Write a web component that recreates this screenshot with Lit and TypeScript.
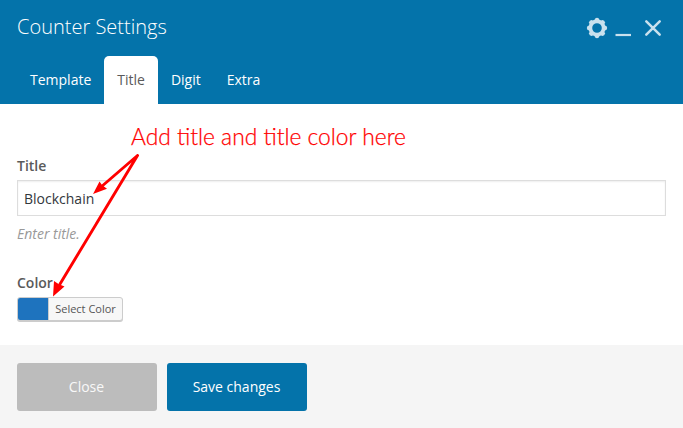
import { LitElement, html, svg, css } from "lit";
import { customElement, state } from "lit/decorators.js";
import { classMap } from "lit/directives/class-map.js";

const TEETH = [0, 45, 90, 135, 180, 225, 270, 315];

@customElement("settings-icon")
class SettingsIcon extends LitElement {
  static styles = css`
    :host { display: block; width: 22px; height: 22px; }
    svg { display: block; }
  `;
  static properties = { name: { type: String } };
  declare name: string;

  render() {
    const shapes: Record<string, unknown> = {
      gear: svg`
        <circle cx="11" cy="11" r="6.6" fill="none" stroke="#c9e1ee" stroke-width="3.6"/>
        ${TEETH.map(a => svg`<path d="M8 4 L9.2 1.4 Q11 .2 12.8 1.4 L14 4Z" fill="#c9e1ee" transform="rotate(${a} 11 11)"/>`)}`,
      minimize: svg`<path d="M3.5 18H19" stroke="#c9e1ee" stroke-width="2.2"/>`,
      close: svg`<path d="M4.3 4.3L17.7 17.7M17.7 4.3L4.3 17.7" stroke="#c9e1ee" stroke-width="2.5" stroke-linecap="round"/>`,
    };
    return html`<svg width="22" height="22" viewBox="0 0 22 22">${shapes[this.name]}</svg>`;
  }
}

@customElement("app-root")
class AppRoot extends LitElement {
  @state() active = "Title";

  static styles = css`
    :host {
      display: flex;
      flex-direction: column;
      position: relative;
      box-sizing: border-box;
      width: 683px;
      height: 428px;
      overflow: hidden;
      background: #fff;
      font-family: "Open Sans", "Noto Sans", sans-serif;
      font-size: 14px;
      color: #5a5a5a;
    }
    * { box-sizing: border-box; }
    .header {
      height: 104px;
      padding: 0 17px;
      background: #0473aa;
      color: #fff;
    }
    .bar { display: flex; align-items: center; height: 56px; justify-content: space-between; }
    .heading { margin: 0; padding-bottom: 3px; font-size: 20px; font-weight: 300; line-height: 28px; }
    .controls { display: flex; gap: 4px; margin-right: 2px; }
    .controls settings-icon:last-child { margin-left: 4px; }
    .tabs { display: flex; height: 48px; }
    .tab { padding: 0 13px; line-height: 48px; border-radius: 5px 5px 0 0; cursor: pointer; }
    .tab.active { background: #fff; color: #5a5a5a; }
    .content { height: 241px; padding: 52px 17px 0; }
    .label { display: block; height: 20px; line-height: 20px; font-weight: 600; }
    .input {
      display: block;
      width: 100%;
      height: 36px;
      margin: 4px 0 8px;
      padding: 0 6px;
      border: 1px solid #ddd;
      box-shadow: inset 0 1px 2px rgba(0, 0, 0, .07);
      font: inherit;
      color: #32373c;
      background: #fff;
      outline: none;
    }
    .hint { height: 20px; line-height: 20px; font-style: italic; color: #999; }
    .second { margin-top: 29px; }
    .picker {
      display: flex;
      width: 106px;
      height: 24px;
      margin-top: 4px;
      border: 1px solid #ccc;
      border-radius: 3px;
      box-shadow: 0 1px 0 #ccc;
      overflow: hidden;
      background: #f7f7f7;
    }
    .swatch { width: 30px; background: #1e73be; }
    .select { flex: 1; border-left: 1px solid #ccc; text-align: center; font-size: 11px; line-height: 22px; color: #555; }
    .footer { display: flex; gap: 10px; height: 83px; padding: 18px 17px; background: #f5f5f5; }
    .button {
      width: 140px;
      height: 48px;
      padding: 0 1px 2px 0;
      border: 0;
      border-radius: 3px;
      font: inherit;
      color: #fff;
      background: #0473aa;
    }
    .button.muted { background: #bcbcbc; color: #f8f8f8; }
    .notes { position: absolute; inset: 0; pointer-events: none; }
    .note { font-family: Lato, sans-serif; font-size: 22.5px; font-weight: 300; fill: #f00; stroke: #f00; stroke-width: .25px; }
  `;

  render() {
    return html`
      <div class="header">
        <div class="bar">
          <h1 class="heading">Counter Settings</h1>
          <div class="controls">
            ${["gear", "minimize", "close"].map(n => html`<settings-icon name=${n}></settings-icon>`)}
          </div>
        </div>
        <div class="tabs">
          ${["Template", "Title", "Digit", "Extra"].map(t => html`
            <div class=${classMap({ tab: true, active: t === this.active })}
              @click=${() => { this.active = t; }}>${t}</div>`)}
        </div>
      </div>
      <div class="content">
        <label class="label">Title</label>
        <input class="input" .value=${"Blockchain"}>
        <div class="hint">Enter title.</div>
        <label class="label second">Color</label>
        <div class="picker"><div class="swatch"></div><div class="select">Select Color</div></div>
      </div>
      <div class="footer">
        <button class="button muted">Close</button>
        <button class="button">Save changes</button>
      </div>
      <svg class="notes" width="683" height="428" viewBox="0 0 683 428">
        <text class="note" x="131" y="145" textLength="275" lengthAdjust="spacingAndGlyphs">Add title and title color here</text>
        <path d="M137.5 155.5L101 187M137.5 155.5L60 284" fill="none" stroke="#f00" stroke-width="2.9" stroke-linecap="round"/>
        <path d="M93 194L99.5 181.5L102 185L107 188.8Z M53 296.5L54 281L58.5 284L64.5 286.5Z" fill="#f00"/>
      </svg>
    `;
  }
}
